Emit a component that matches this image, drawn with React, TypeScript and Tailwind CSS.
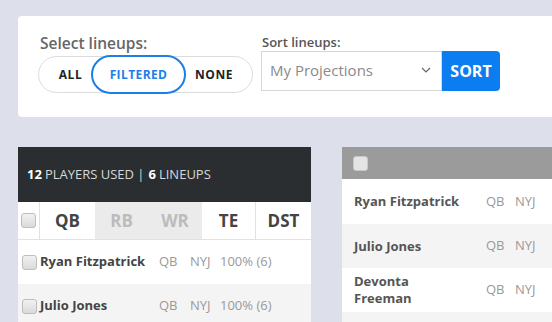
import React from 'react';

const font = { fontFamily: '"Open Sans", "Liberation Sans", sans-serif' };

const Check = ({ light }: { light?: boolean }) => (
  <span
    className={`inline-block w-[15px] h-[15px] rounded-[3px] border ${
      light ? 'border-[#c8c8c8] bg-[#e4e4e4]' : 'border-[#bdbdbd] bg-gradient-to-b from-[#f2f2f2] to-[#dadada]'
    }`}
  />
);

const leftRows = [
  { name: 'Ryan Fitzpatrick', bg: 'bg-white' },
  { name: 'Julio Jones', bg: 'bg-[#f4f4f4]' },
];

const rightRows = [
  { name: 'Ryan Fitzpatrick', bg: 'bg-white' },
  { name: 'Julio Jones', bg: 'bg-[#f4f4f4]' },
  { name: 'Devonta Freeman', bg: 'bg-white' },
  { name: '', bg: 'bg-[#f4f4f4]' },
];

export default function App() {
  return (
    <div className="w-[552px] h-[322px] overflow-hidden bg-[#dde0ea]" style={font}>
      {/* Filter card */}
      <div className="ml-[18px] mt-[16px] w-[600px] h-[101px] bg-white rounded-[4px] flex pl-[20px] pt-[17px]">
        <div className="flex flex-col">
          <div className="ml-[2px] text-[15.5px] font-semibold text-[#666] leading-[20px]">Select lineups:</div>
          <div className="mt-[3px] w-[215px] h-[37px] rounded-full border border-[#dcdcdc] flex items-center">
            <div className="w-[52px] pl-[11px] text-center text-[12px] font-bold text-[#222] tracking-[0.5px]">ALL</div>
            <div className="w-[95px] h-[39px] rounded-full border-2 border-[#1a7fe8] flex items-center justify-center text-[12px] font-bold text-[#1a7fe8] tracking-[0.4px]">
              FILTERED
            </div>
            <div className="flex-1 pr-[10px] text-center text-[12px] font-bold text-[#222] tracking-[0.5px]">NONE</div>
          </div>
        </div>
        <div className="ml-[8px] flex flex-col">
          <div className="ml-[1px] mt-[1px] text-[13px] font-semibold text-[#555] leading-[16px]">Sort lineups:</div>
          <div className="mt-[1px] flex h-[40px]">
            <div className="w-[181px] border border-[#d6d6d6] flex items-center justify-between pl-[8px] pr-[10px] pb-[2px]">
              <span className="text-[15px] text-[#8a8a8a]">My Projections</span>
              <svg width="10" height="6" viewBox="0 0 10 6" fill="none">
                <path d="M1 1l4 4 4-4" stroke="#666" strokeWidth="1.2" />
              </svg>
            </div>
            <div className="w-[58px] bg-[#0b7df0] rounded-r-[4px] flex items-center justify-center text-white text-[16px] font-bold">
              SORT
            </div>
          </div>
        </div>
      </div>

      <div className="flex mt-[30px] ml-[18px] gap-[31px]">
        {/* Left panel */}
        <div className="w-[293px] shrink-0">
          <div className="h-[55px] bg-[#2a2e31] flex items-center pl-[9px] text-[13px] text-[#d8d8d8] pt-[1px]">
            <span className="font-bold text-white">12</span>
            <span className="ml-[3px]">PLAYERS USED |</span>
            <span className="ml-[4px] font-bold text-white">6</span>
            <span className="ml-[3px]">LINEUPS</span>
          </div>
          <div className="h-[38px] bg-white flex border-b border-[#e2e2e2] text-[17px] font-bold">
            <div className="w-[22px] flex items-center justify-center border-r border-[#e2e2e2]">
              <Check />
            </div>
            <div className="w-[55px] flex items-center justify-center text-[#444]">QB</div>
            <div className="w-[53px] flex items-center justify-center bg-[#ebebeb] text-[#bcbcbc]">RB</div>
            <div className="w-[54px] flex items-center justify-center bg-[#ebebeb] text-[#bcbcbc]">WR</div>
            <div className="w-[54px] flex items-center justify-center text-[#444] border-r border-[#e2e2e2]">TE</div>
            <div className="flex-1 flex items-center justify-center text-[#444]">DST</div>
          </div>
          {leftRows.map((r) => (
            <div key={r.name} className={`h-[44px] flex items-center pl-[4px] ${r.bg}`}>
              <Check />
              <span className="ml-[3px] w-[119px] text-[13px] font-bold text-[#444]">{r.name}</span>
              <span className="w-[31px] text-[13px] text-[#999]">QB</span>
              <span className="w-[30px] text-[13px] text-[#999]">NYJ</span>
              <span className="text-[13px] text-[#999]">100% (6)</span>
            </div>
          ))}
        </div>

        {/* Right panel */}
        <div className="w-[260px] shrink-0">
          <div className="h-[32px] bg-[#9b9b9b] flex items-center pl-[11px]">
            <Check light />
          </div>
          {rightRows.map((r, i) => (
            <div key={i} className={`${i === 0 ? 'h-[45px]' : 'h-[44px]'} flex items-center pl-[12px] ${r.bg}`}>
              {r.name && (
                <>
                  <span className="w-[132px] text-[13px] font-bold text-[#555] leading-[17px]">
                    {r.name === 'Devonta Freeman' ? (
                      <>
                        Devonta
                        <br />
                        Freeman
                      </>
                    ) : (
                      r.name
                    )}
                  </span>
                  <span className="w-[29px] text-[13px] text-[#999]">QB</span>
                  <span className="text-[13px] text-[#999]">NYJ</span>
                </>
              )}
            </div>
          ))}
        </div>
      </div>
    </div>
  );
}
